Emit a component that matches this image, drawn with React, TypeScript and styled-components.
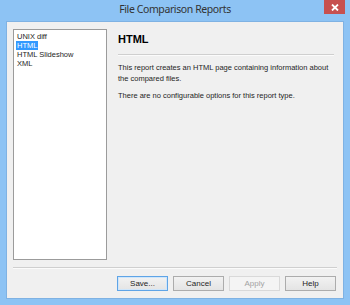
import React from "react";
import styled, { createGlobalStyle } from "styled-components";

const GlobalStyle = createGlobalStyle`
  html, body {
    margin: 0;
    padding: 0;
    background: #8dc3f4;
  }
  #root {
    width: 350px;
    height: 305px;
  }
`;

const reports = ["UNIX diff", "HTML", "HTML Slideshow", "XML"];

const App: React.FC = () => {
  const selected = "HTML";

  return (
    <>
      <GlobalStyle />
      <Window>
        <TitleBar>
          <Title>File Comparison Reports</Title>
          <CloseButton>
            <svg width="8" height="7" viewBox="0 0 8 7">
              <path d="M1 0.5 L7 6.5 M7 0.5 L1 6.5" stroke="#fff" strokeWidth="1.8" />
            </svg>
          </CloseButton>
        </TitleBar>
        <Client>
          <Body>
            <ReportList>
              {reports.map((name) => (
                <ReportItem key={name}>
                  <ItemLabel $selected={name === selected}>{name}</ItemLabel>
                </ReportItem>
              ))}
            </ReportList>
            <Details>
              <Heading>HTML</Heading>
              <Rule />
              <Paragraph>
                This report creates an HTML page containing information about the compared files.
              </Paragraph>
              <Paragraph>There are no configurable options for this report type.</Paragraph>
            </Details>
          </Body>
          <Rule />
          <ButtonRow>
            <Button $default>Save...</Button>
            <Button>Cancel</Button>
            <Button disabled>Apply</Button>
            <Button>Help</Button>
          </ButtonRow>
        </Client>
      </Window>
    </>
  );
};

const Window = styled.div`
  width: 350px;
  height: 305px;
  box-sizing: border-box;
  display: flex;
  flex-direction: column;
  background: #8dc3f4;
  padding: 0 6px 6px 6px;
`;

const TitleBar = styled.div`
  height: 21px;
  flex-shrink: 0;
  display: flex;
  align-items: flex-start;
  justify-content: center;
  position: relative;
`;

const Title = styled.div`
  font-family: "Noto Sans", "Open Sans", sans-serif;
  font-size: 10.5px;
  letter-spacing: -0.4px;
  line-height: 21px;
  color: #333;
  margin-top: -1px;
`;

const CloseButton = styled.div`
  position: absolute;
  top: 0;
  right: -1px;
  width: 21px;
  height: 14px;
  background: #c7504f;
  display: flex;
  align-items: center;
  justify-content: center;
`;

const Client = styled.div`
  flex: 1;
  background: #f0f0f0;
  border: 1px solid #7fb2e3;
  display: flex;
  flex-direction: column;
  padding: 7px 6px 7px 6px;
  gap: 7px;
  font-family: "Liberation Sans", Arial, sans-serif;
  font-size: 7.5px;
  color: #1e1e1e;
`;

const Body = styled.div`
  flex: 1;
  display: flex;
  gap: 11px;
`;

const ReportList = styled.ul`
  width: 94px;
  box-sizing: border-box;
  margin: 0;
  padding: 2px 2px;
  list-style: none;
  background: #ffffff;
  border: 1px solid #9b9b9b;
`;

const ReportItem = styled.li`
  height: 9px;
  display: flex;
  align-items: center;
`;

const ItemLabel = styled.span<{ $selected?: boolean }>`
  padding: 0 1px;
  line-height: 9px;
  background: ${({ $selected }) => ($selected ? "#3399ff" : "transparent")};
  color: ${({ $selected }) => ($selected ? "#ffffff" : "#1e1e1e")};
`;

const Details = styled.div`
  flex: 1;
  display: flex;
  flex-direction: column;
  padding-right: 3px;
`;

const Heading = styled.h1`
  margin: 5px 0 9px;
  font-size: 11px;
  line-height: 11px;
  font-weight: bold;
  color: #000;
`;

const Rule = styled.div`
  height: 0;
  border-top: 1px solid #cfcfcf;
  border-bottom: 1px solid #fbfbfb;
`;

const Paragraph = styled.p`
  margin: 0 0 6px;
  line-height: 11px;

  &:first-of-type {
    margin-top: 6px;
  }
`;

const ButtonRow = styled.div`
  display: flex;
  justify-content: flex-end;
  gap: 5px;
  padding-right: 1px;
`;

const Button = styled.button<{ $default?: boolean }>`
  width: 51px;
  height: 15px;
  box-sizing: border-box;
  padding: 0;
  font-family: "Liberation Sans", Arial, sans-serif;
  font-size: 8px;
  color: #1e1e1e;
  background: linear-gradient(#f2f2f2, #e4e4e4);
  border: 1px solid ${({ $default }) => ($default ? "#5fa4e6" : "#acacac")};
  box-shadow: ${({ $default }) => ($default ? "inset 0 0 0 1px #cfe6fb" : "none")};

  &:disabled {
    color: #a3a3a3;
    background: #f4f4f4;
    border-color: #d9d9d9;
  }
`;

export default App;
